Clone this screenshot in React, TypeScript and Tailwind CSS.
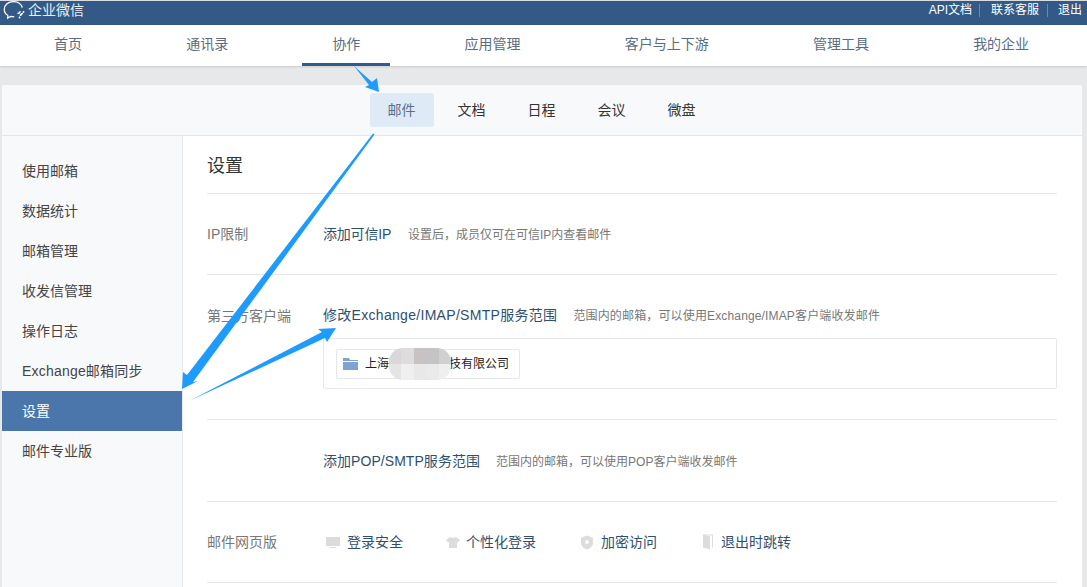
const NAV = ['首页', '通讯录', '协作', '应用管理', '客户与上下游', '管理工具', '我的企业'];
const TABS = ['邮件', '文档', '日程', '会议', '微盘'];
const SIDE = ['使用邮箱', '数据统计', '邮箱管理', '收发信管理', '操作日志', 'Exchange邮箱同步', '设置', '邮件专业版'];
const MOSAIC = ['#d8d8d8', '#dedcdc', '#c8c2c3', '#c4c3c5', '#d0d0d0', '#e4e4e4', '#efefef', '#e8e8e8', '#eaeaea', '#efefef'];

function Logo() {
  return (
    <svg width="25" height="19" viewBox="0 0 25 19" fill="none" stroke="#fff" strokeWidth="1.3">
      <path d="M6 14.500C3.500 13 2.300 10.800 2.300 8.400 2.300 4 6.400.6 11.400.6c4.300 0 8 2.500 8.900 6" />
      <path d="M6 14.500l-.3 2.500 3-1.600c1.100.3 2.300.4 3.500.3" />
      <path d="M15.500 12.500c1.500 0 2.400-1 2.500-2.300M18.500 15c0-1.400 1-2.400 2.400-2.500" strokeWidth="1.600" />
      <circle cx="17.500" cy="16.500" r=".9" fill="#fff" stroke="none" />
      <circle cx="21.500" cy="11" r=".9" fill="#fff" stroke="none" />
    </svg>
  );
}

function Monitor() {
  return (
    <svg width="16" height="13" viewBox="0 0 16 13" fill="#dcdcdc">
      <rect x="1" y="1" width="14" height="9" />
      <rect x="5" y="11" width="6" height="1" />
    </svg>
  );
}

function Shirt() {
  return (
    <svg width="16" height="13" viewBox="0 0 16 13" fill="#dcdcdc">
      <path d="M5 1l3 1 3-1 4 3-2 2.500-1-.7V12H4V5.800l-1 .7L1 4z" />
    </svg>
  );
}

function Shield() {
  return (
    <svg width="14" height="15" viewBox="0 0 14 15">
      <path d="M7 .5l6 2.300v5.200c0 3-3 5.500-6 6.500-3-1-6-3.500-6-6.500V2.800z" fill="#dcdcdc" />
      <circle cx="7" cy="7" r="2" fill="#fff" />
    </svg>
  );
}

function DoorIcon() {
  return (
    <svg width="12" height="16" viewBox="0 0 12 16">
      <path d="M1 .5h10v13h-1V1.500H1z" fill="#dcdcdc" />
      <path d="M1 .5l7 2v13l-7-2z" fill="#dcdcdc" />
    </svg>
  );
}

function FolderIcon() {
  return (
    <svg width="15" height="12" viewBox="0 0 15 12" fill="#7fa3d1">
      <path d="M0 0h6l1 2h8v1H0z" />
      <rect y="4" width="15" height="8" />
    </svg>
  );
}

function Arrows() {
  return (
    <svg className="absolute left-0 top-0 pointer-events-none" width="1087" height="587" viewBox="0 0 1087 587">
      <g fill="#1e9bff">
        <polygon points="354,66 372,82 377,78 379,92 365,87 369,85" />
        <polygon points="374.500,134.500 373,133.500 187,375 183,372 182,389 198,381 193,382" />
        <polygon points="189,401 322,332 318,329 336,328 327,342 325,338" />
      </g>
    </svg>
  );
}

export default function App() {
  return (
    <div className="relative w-[1087px] h-[587px] overflow-hidden bg-[#e7e8ea] font-['Liberation_Sans','Noto_Sans_CJK_SC',sans-serif] text-[14px]">
      {/* top bar */}
      <div className="h-[25px] bg-[#335a86] border-t border-[#d8dde3] flex items-start justify-between text-white leading-[18px]">
        <div className="flex items-start pl-[2px] gap-[1px]">
          <Logo />
          <span className="text-[14px] text-[#e9eef4]">企业微信</span>
        </div>
        <div className="flex items-center text-[12px] pr-[5px]">
          <span>API文档</span>
          <span className="mx-[7px] w-px h-[13px] bg-[#6f8aa8]" />
          <span className="ml-[4px]">联系客服</span>
          <span className="ml-[8px] mr-[10px] w-px h-[13px] bg-[#6f8aa8]" />
          <span>退出</span>
        </div>
      </div>

      {/* main nav */}
      <div className="h-[41px] bg-white shadow-[0_1px_2px_rgba(0,0,0,0.12)] flex pl-6 gap-[44.200px] text-[#5b6b80]">
        {NAV.map((n) => (
          <div
            key={n}
            className={`px-[30px] flex items-center justify-center border-b-[3px] ${n === '协作' ? 'border-[#2f5a8c]' : 'border-transparent'}`}
          >
            {n}
          </div>
        ))}
      </div>

      {/* card */}
      <div className="mt-[19px] ml-[2px] mr-[5px] bg-white rounded-t-[3px] h-[520px]">
        <div className="h-[51px] bg-[#f8f9fb] border-b border-[#e6e7e9] flex justify-center items-start pt-[8px] gap-[6px] pr-[1px] rounded-t-[3px] text-[#333]">
          {TABS.map((t) => (
            <div
              key={t}
              className={`w-[64px] h-[34px] rounded-[3px] flex items-center justify-center ${t === '邮件' ? 'bg-[#dfeaf7] text-[#5b6f8c]' : ''}`}
            >
              {t}
            </div>
          ))}
        </div>

        <div className="flex">
          <div className="w-[181px] h-[470px] bg-[#f8f9fb] border-r border-[#e6e7e9] pt-[15px] shrink-0">
            {SIDE.map((s) => (
              <div
                key={s}
                className={`h-[40px] flex items-center pl-5 ${s === '设置' ? 'bg-[#4a76ab] text-white' : 'text-[#444]'} ${s.startsWith('Exchange') ? 'tracking-[0.2px]' : ''}`}
              >
                {s}
              </div>
            ))}
          </div>

          <div className="flex-1 pl-[24px] pr-[25px] text-[#2f4f6f]">
            <div className="h-[58px] pt-[17px] text-[18px] leading-[26px] text-[#333] border-b border-[#e6e7e9]">设置</div>

            <div className="h-[81px] border-b border-[#e6e7e9] flex items-center">
              <div className="w-[116px] text-[#777]">IP限制</div>
              <span className="mr-[17px] tracking-[-0.2px]">添加可信IP</span>
              <span className="text-[12px] text-[#777] mt-[2px]">设置后，成员仅可在可信IP内查看邮件</span>
            </div>

            <div className="h-[145px] border-b border-[#e6e7e9] pt-[31px]">
              <div className="flex items-center h-[20px]">
                <div className="w-[116px] text-[#777]">第三方客户端</div>
                <span className="mr-4 tracking-[0.3px] mb-[2px]">修改Exchange/IMAP/SMTP服务范围</span>
                <span className="text-[12px] text-[#777] tracking-[0.15px]">范围内的邮箱，可以使用Exchange/IMAP客户端收发邮件</span>
              </div>
              <div className="ml-[116px] mt-[12px] h-[51px] border border-[#e6e7e9] rounded-[2px] pt-[10px] pl-[12px]">
                <div className="relative w-[184px] h-[30px] border border-[#e6e7e9] rounded-[2px] flex items-center pl-[6px] gap-[7px] text-[12px] text-[#222]">
                  <FolderIcon />
                  <span>上海某某某某科技有限公司</span>
                  <div className="absolute left-[52px] -top-[2px] w-[62px] h-[32px] rounded-[14px] overflow-hidden grid grid-cols-5 grid-rows-2">
                    {MOSAIC.map((c, i) => (
                      <div key={i} style={{ backgroundColor: c }} />
                    ))}
                  </div>
                </div>
              </div>
            </div>

            <div className="h-[82px] border-b border-[#e6e7e9] flex items-center pl-[116px] pt-[1px]">
              <span className="mr-4 tracking-[0.05px]">添加POP/SMTP服务范围</span>
              <span className="text-[12px] text-[#777] mt-[1px]">范围内的邮箱，可以使用POP客户端收发邮件</span>
            </div>

            <div className="h-[81px] border-b border-[#e6e7e9] flex items-center">
              <div className="w-[118px] text-[#777]">邮件网页版</div>
              <div className="flex items-center gap-[6px] w-[120px]"><Monitor />登录安全</div>
              <div className="flex items-center gap-[5px] w-[135px]"><Shirt />个性化登录</div>
              <div className="flex items-center gap-[7px] w-[122px]"><Shield />加密访问</div>
              <div className="flex items-center gap-[7px]"><DoorIcon />退出时跳转</div>
            </div>
          </div>
        </div>
      </div>

      <Arrows />
    </div>
  );
}
